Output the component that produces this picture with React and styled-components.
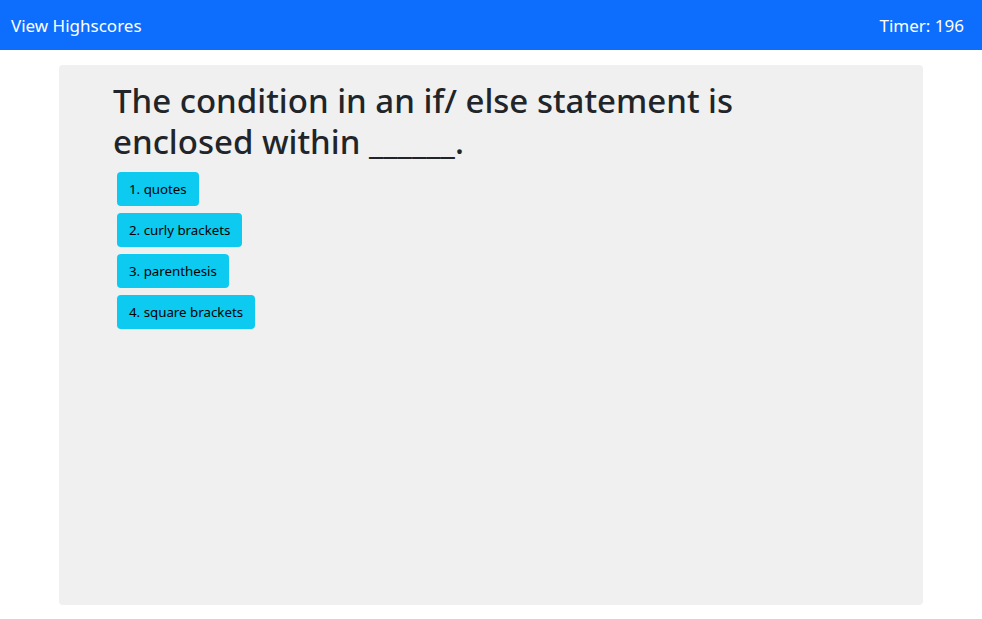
import React from "react";
import styled, { createGlobalStyle } from "styled-components";

const GlobalStyle = createGlobalStyle`
  body {
    margin: 0;
    font-family: "Noto Sans", "Open Sans", sans-serif;
    color: #212529;
    background: #fff;
  }
`;

const Navbar = styled.nav`
  height: 50px;
  background: #0d6efd;
  display: flex;
  align-items: center;
  justify-content: space-between;
  padding: 0 18px 0 11px;
  color: #fff;
  font-size: 17px;
`;

const NavLink = styled.a`
  color: #fff;
  text-decoration: none;
  cursor: pointer;
`;

const Card = styled.main`
  width: 864px;
  height: 540px;
  margin: 15px auto 0;
  background: #f0f0f0;
  border-radius: 4px;
  padding: 15px 54px;
  box-sizing: border-box;
`;

const Question = styled.h2`
  margin: 0 0 10px;
  font-size: 33px;
  font-weight: 500;
  line-height: 41px;
  max-width: 700px;
`;

const Choices = styled.div`
  display: flex;
  flex-direction: column;
  align-items: flex-start;
  gap: 7px;
  padding-left: 4px;
`;

const Choice = styled.button`
  height: 34px;
  padding: 0 12px;
  border: none;
  border-radius: 4px;
  background: #0dcaf0;
  color: #000;
  font-family: inherit;
  font-size: 13.3px;
  cursor: pointer;
`;

const choices = ["quotes", "curly brackets", "parenthesis", "square brackets"];

export default function App() {
  return (
    <>
      <GlobalStyle />
      <Navbar>
        <NavLink>View Highscores</NavLink>
        <span>Timer: 196</span>
      </Navbar>
      <Card>
        <Question>
          The condition in an if/ else statement is enclosed within ______.
        </Question>
        <Choices>
          {choices.map((c, i) => (
            <Choice key={c}>{`${i + 1}. ${c}`}</Choice>
          ))}
        </Choices>
      </Card>
    </>
  );
}
